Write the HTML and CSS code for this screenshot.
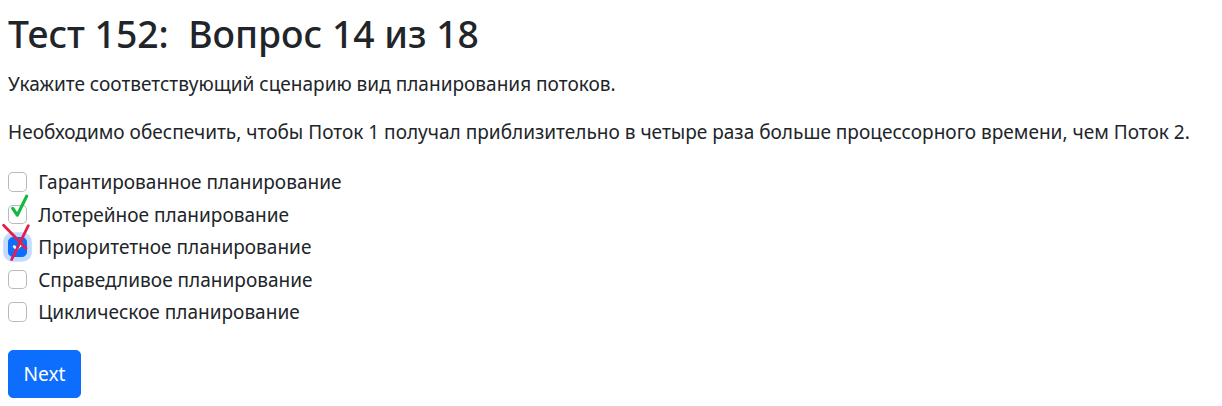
FILE: index.html
```html
<!DOCTYPE html>
<html lang="ru">
<head>
<meta charset="utf-8">
<title>Тест 152</title>
<link rel="stylesheet" href="styles.css">
</head>
<body>
<div class="page">
  <h2 class="title">Тест 152:&nbsp; Вопрос 14 из 18</h2>
  <p class="text">Укажите соответствующий сценарию вид планирования потоков.</p>
  <p class="text">Необходимо обеспечить, чтобы Поток 1 получал приблизительно в четыре раза больше процессорного времени, чем Поток 2.</p>
  <div class="options">
    <div class="form-check">
      <span class="box"></span>
      <span class="label">Гарантированное планирование</span>
    </div>
    <div class="form-check">
      <span class="box"></span>
      <span class="label">Лотерейное планирование</span>
      <svg class="mark" width="36" height="40" viewBox="0 0 36 40"><path d="M12.7 19.4 L17.3 26.1 L26.7 7.1" fill="none" stroke="#12b83f" stroke-width="3.2" stroke-linecap="round" stroke-linejoin="round"/></svg>
    </div>
    <div class="form-check">
      <span class="box checked"><svg width="19" height="19" viewBox="0 0 20 20"><path d="m6 10 3 3 6-6" fill="none" stroke="#fff" stroke-width="3" stroke-linecap="round" stroke-linejoin="round"/></svg></span>
      <span class="label">Приоритетное планирование</span>
      <svg class="mark" width="36" height="40" viewBox="0 0 36 40"><path d="M3.6 3.2 L26 26.3 M28.3 3.7 L11.7 37.5" fill="none" stroke="#e3204c" stroke-width="2.8" stroke-linecap="round"/></svg>
    </div>
    <div class="form-check">
      <span class="box"></span>
      <span class="label">Справедливое планирование</span>
    </div>
    <div class="form-check">
      <span class="box"></span>
      <span class="label">Циклическое планирование</span>
    </div>
  </div>
  <button class="btn" type="button">Next</button>
</div>
</body>
</html>
```

FILE: styles.css
```css
html, body {
  margin: 0;
  padding: 0;
  background: #fff;
}
body {
  font-family: "Noto Sans", "Open Sans", sans-serif;
  font-size: 19.05px;
  line-height: 1.5;
  color: #212529;
}
.page {
  padding: 12px 8px 0 8px;
}
.title {
  margin: 0 0 13px 0;
  font-size: 37.3px;
  font-weight: 500;
  line-height: 1.2;
}
.text {
  margin: 0 0 19.2px 0;
  line-height: 28.8px;
}
.options {
  padding-top: 2.5px;
}
.form-check {
  position: relative;
  display: flex;
  align-items: flex-start;
  height: 28.8px;
  line-height: 28.8px;
  margin-bottom: 3.7px;
}
.box {
  box-sizing: border-box;
  flex: none;
  width: 19.2px;
  height: 19.2px;
  margin-top: 4.2px;
  border: 1px solid rgba(0,0,0,.27);
  border-radius: 4.8px;
  background: #fff;
  display: flex;
  align-items: center;
  justify-content: center;
}
.box.checked {
  background: #0d6efd;
  border-color: #0d6efd;
  box-shadow: 0 0 0 4.8px rgba(13,110,253,.25);
}
.label {
  margin-left: 11px;
}
.mark {
  position: absolute;
  left: -8px;
  top: -11.5px;
}
.btn {
  margin-top: 19.6px;
  font-family: inherit;
  font-size: 19.2px;
  line-height: 28.8px;
  color: #fff;
  background: #0d6efd;
  border: 1px solid #0d6efd;
  border-radius: 5px;
  padding: 8.6px 14.4px;
  cursor: pointer;
}
```
